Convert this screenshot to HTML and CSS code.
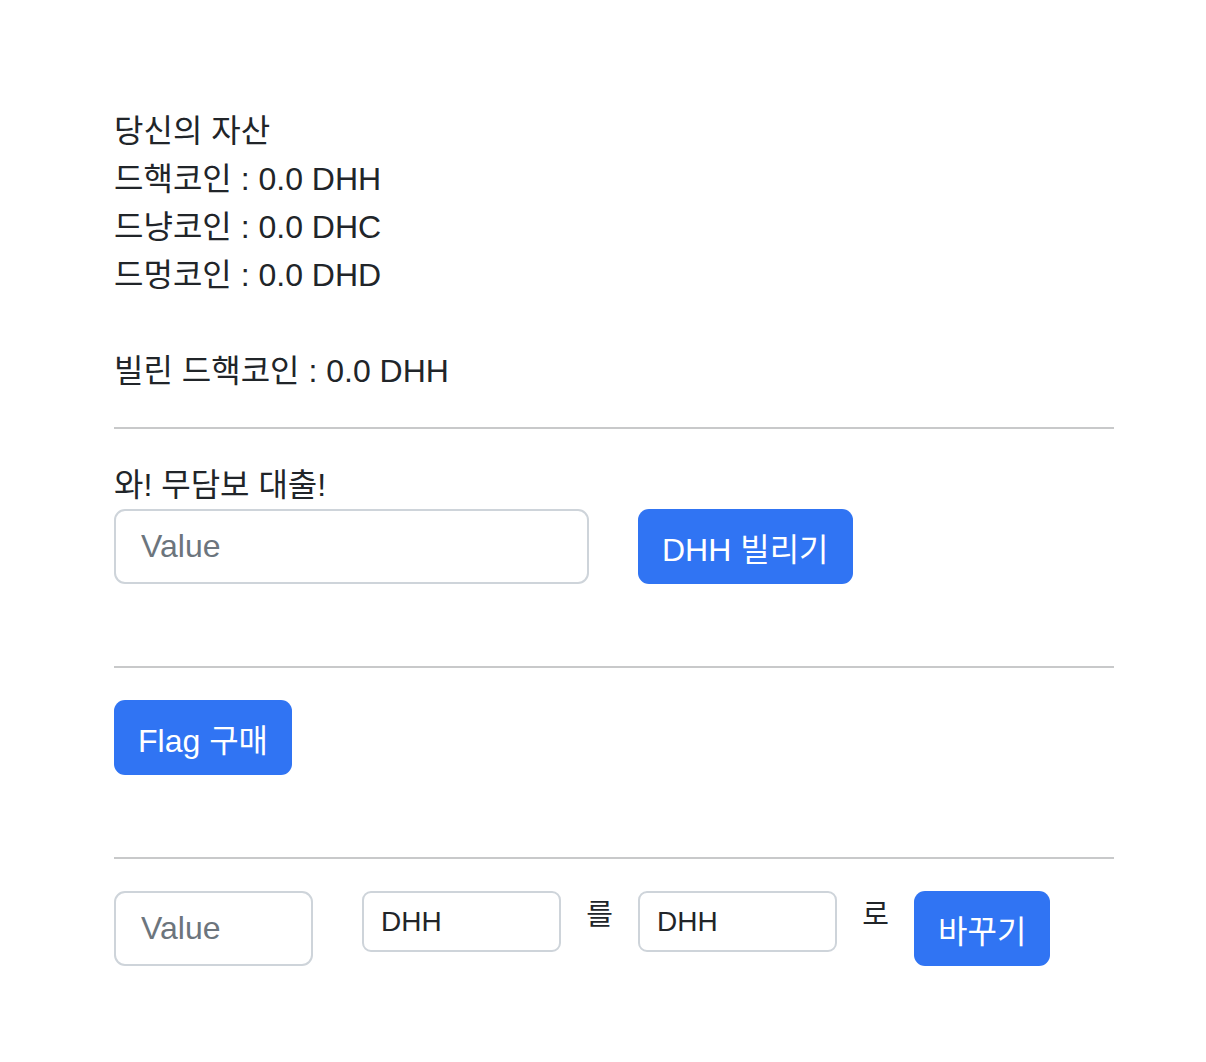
FILE: index.html
```html
<!DOCTYPE html>
<html lang="ko">
<head>
  <meta charset="UTF-8" />
  <meta name="viewport" content="width=device-width, initial-scale=1.0"/>
  <title>드핵 은행</title>
  <link rel="stylesheet" href="styles.css">
</head>
<body>
  <div class="wrap">
    <p class="assets">
      당신의 자산<br>
      드핵코인 : <span id="dhh">0.0</span> DHH<br>
      드냥코인 : <span id="dhc">0.0</span> DHC<br>
      드멍코인 : <span id="dhd">0.0</span> DHD<br>
      <br>
      빌린 드핵코인 : <span id="debt">0.0</span> DHH
    </p>

    <hr>

    <div class="section">
      <label for="loan">와! 무담보 대출!</label>
      <div class="loan-row">
        <input type="number" id="loan" class="field field-wide" placeholder="Value">
        <button class="btn">DHH 빌리기</button>
      </div>
    </div>

    <hr>

    <div class="section">
      <button class="btn">Flag 구매</button>
    </div>

    <hr>

    <div class="swap-row">
      <input type="number" id="amount" class="field field-small" placeholder="Value">
      <select id="from" class="coin">
        <option>DHH</option>
        <option>DHC</option>
        <option>DHD</option>
      </select>
      <span class="word">를</span>
      <select id="to" class="coin">
        <option>DHH</option>
        <option>DHC</option>
        <option>DHD</option>
      </select>
      <span class="word">로</span>
      <button class="btn">바꾸기</button>
    </div>
  </div>
</body>
</html>
```

FILE: styles.css
```css
* {
  margin: 0;
  padding: 0;
  box-sizing: border-box;
  font-family: "Liberation Sans", "Noto Sans CJK KR", sans-serif;
}

body {
  background: #fff;
  color: #212529;
  font-size: 32px;
  line-height: 48px;
}

.wrap {
  width: 1000px;
  margin-left: 114px;
  padding-top: 107px;
}

hr {
  border: none;
  border-top: 2px solid #c8c9ca;
  margin: 32px 0;
}

.section {
  padding-bottom: 50px;
}

label {
  display: block;
}

.loan-row {
  display: flex;
  gap: 49px;
}

.field {
  height: 75px;
  padding: 0 25px;
  border: 2px solid #ced4da;
  border-radius: 11px;
  font-size: 32px;
  color: #212529;
  background: #fff;
  outline: none;
  -moz-appearance: textfield;
}

.field::placeholder {
  color: #6c757d;
}

.field::-webkit-inner-spin-button,
.field::-webkit-outer-spin-button {
  -webkit-appearance: none;
}

.field-wide {
  width: 475px;
}

.field-small {
  width: 199px;
  margin-right: 49px;
}

.btn {
  height: 75px;
  padding: 0 24px;
  border: none;
  border-radius: 11px;
  background: #3074f3;
  color: #fff;
  font-size: 32px;
  cursor: pointer;
}

.swap-row {
  display: flex;
  align-items: flex-start;
}

.coin {
  width: 199px;
  height: 61px;
  padding: 0 17px;
  border: 2px solid #ced4da;
  border-radius: 9px;
  background: #fff;
  color: #212529;
  font-size: 28px;
  -webkit-appearance: none;
  appearance: none;
}

.word {
  width: 77px;
  text-align: center;
  font-size: 29px;
  line-height: 48px;
}
```
